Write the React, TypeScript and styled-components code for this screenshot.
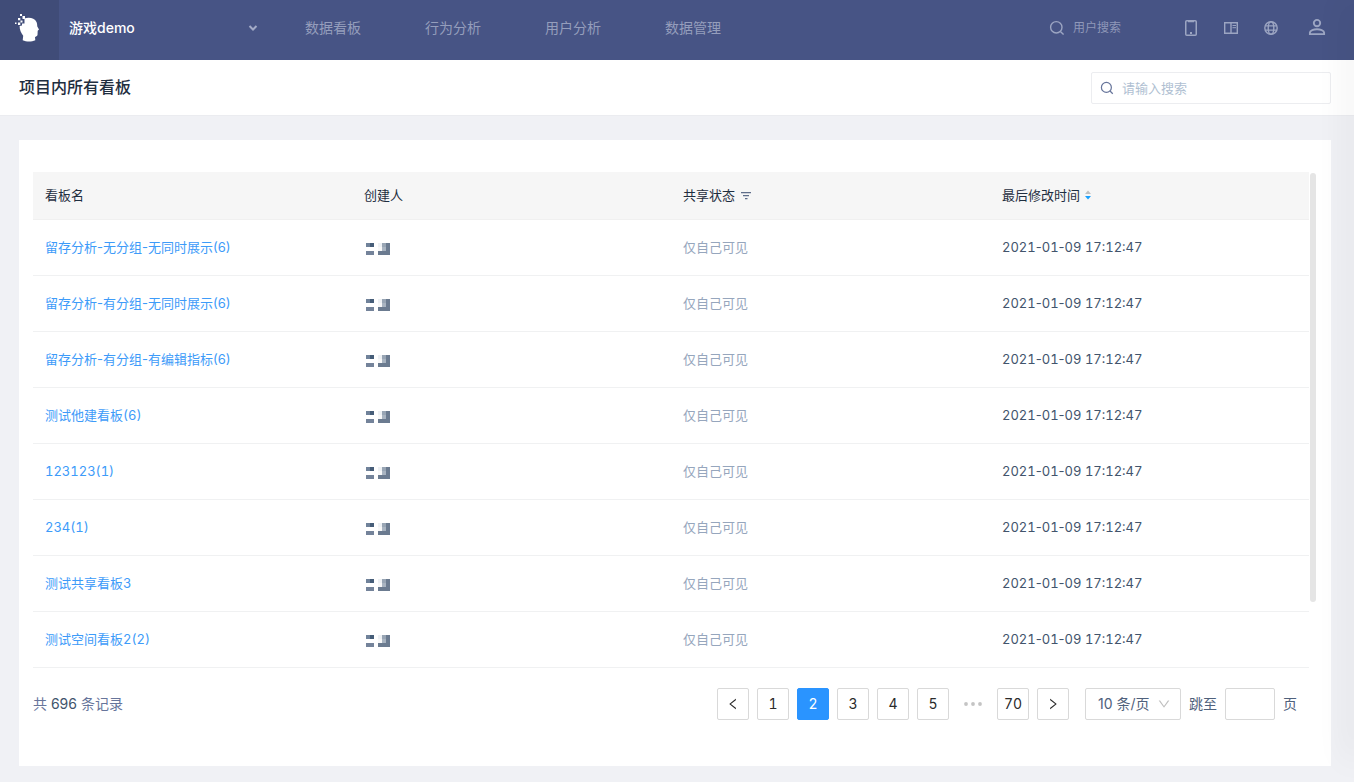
import React from "react";
import styled, { createGlobalStyle } from "styled-components";
import { AiOutlineLeft, AiOutlineRight, AiOutlineDown } from "react-icons/ai";

const GlobalStyle = createGlobalStyle`
  *, *::before, *::after { box-sizing: border-box; }
  body {
    margin: 0;
    background: #f0f1f5;
    color: #1f2e40;
    font: 14px/22px Inter, "Noto Sans CJK SC", sans-serif;
  }
  button, input, select { font: inherit; color: inherit; margin: 0; }
  button { padding: 0; border: 0; background: none; cursor: pointer; }
  a { text-decoration: none; }
  svg { display: block; flex: none; }
`;

const Page = styled.div`
  min-height: 100vh;
  display: flex;
  flex-direction: column;
`;

const TopBar = styled.header`
  display: flex;
  align-items: stretch;
  height: 60px;
  background: #475485;
  color: #9ca5c2;
`;

const Brand = styled.a`
  display: flex;
  width: 59px;
  padding: 13px 0 0 14px;
  background: #404c78;
`;

const ProjectButton = styled.button`
  display: flex;
  align-items: center;
  justify-content: space-between;
  width: 214px;
  padding: 0 14px 4px 10px;
  && { color: #a3abc7; }
`;

const ProjectName = styled.span`
  color: #fff;
  font-weight: 500;
`;

const Nav = styled.nav`
  flex: 1;
  display: flex;
  align-items: center;
  padding: 0 0 4px 32px;
  gap: 64px;
`;

const NavLink = styled.a`
  color: #959ebc;
`;

const Tools = styled.div`
  display: flex;
  align-items: center;
  padding: 0 28px 4px 0;
`;

const UserSearch = styled.label`
  display: flex;
  align-items: center;
  gap: 8px;
  margin-right: 24px;
`;

const UserSearchInput = styled.input`
  width: 87px;
  padding: 0;
  border: 0;
  outline: 0;
  background: transparent;
  font-size: 12px;
  &::placeholder { color: #8f98b9; opacity: 1; }
`;

const IconButton = styled.button<{ $last?: boolean }>`
  display: flex;
  justify-content: center;
  width: ${(p) => (p.$last ? 18 : 14)}px;
  margin-right: ${(p) => (p.$last ? 0 : 26)}px;
  && { color: #9ca5c2; }
  &:nth-last-child(2) { margin-right: 30px; }
`;

const TitleBar = styled.div`
  display: flex;
  align-items: center;
  justify-content: space-between;
  height: 55px;
  padding: 0 23px 0 19px;
  background: #fff;
  box-shadow: 0 1px 0 #ebecf0;
`;

const Title = styled.h1`
  margin: 0;
  padding-bottom: 2px;
  font-size: 16px;
  line-height: 24px;
  font-weight: 500;
`;

const SearchBox = styled.label`
  display: flex;
  align-items: center;
  gap: 8px;
  width: 240px;
  height: 32px;
  padding: 0 8px;
  border: 1px solid #ecedf0;
  border-radius: 2px;
  color: #67759b;
`;

const SearchInput = styled.input`
  flex: 1;
  min-width: 0;
  padding: 0;
  border: 0;
  outline: 0;
  background: transparent;
  font-size: 13px;
  &::placeholder { color: #b0bfd2; opacity: 1; }
`;

const Card = styled.main`
  flex: 1;
  margin: 25px 23px 16px 19px;
  padding: 32px 15px 46px 14px;
  background: #fff;
`;

const TableArea = styled.div`
  display: flex;
  gap: 1px;
`;

const TableWrap = styled.div`
  flex: 1;
  min-width: 0;
`;

const ScrollTrack = styled.div`
  display: flex;
  width: 6px;
  padding-top: 1px;
`;

const ScrollThumb = styled.div`
  width: 6px;
  height: calc(100% - 66px);
  border-radius: 3px;
  background: #e5e5e5;
`;

const Table = styled.table`
  width: 100%;
  table-layout: fixed;
  border-collapse: separate;
  border-spacing: 0;
  font-size: 13px;
`;

const HeadCell = styled.th`
  height: 48px;
  padding: 0 12px 2px;
  background: #f6f6f6;
  border-bottom: 1px solid #f0f0f0;
  text-align: left;
  font-weight: 400;
`;

const HeadContent = styled.div`
  display: flex;
  align-items: center;
  gap: 5px;
`;

const Cell = styled.td<{ $tone?: string }>`
  height: 56px;
  padding: 0 12px 2px;
  border-bottom: 1px solid #f0f1f2;
  color: ${(p) => p.$tone || "#42546c"};
`;

const BoardLink = styled.a<{ $tabular: boolean }>`
  color: #3d9bf9;
  font-variant-numeric: ${(p) => (p.$tabular ? "tabular-nums" : "normal")};
`;

const DateText = styled.time`
  font-variant-numeric: tabular-nums;
`;

const Dash = styled.span`
  font-variant-numeric: normal;
`;

const Footer = styled.div`
  display: flex;
  align-items: center;
  justify-content: space-between;
  margin-top: 20px;
  padding-right: 19px;
`;

const Total = styled.div`
  color: #67759b;
  b { font-weight: 400; color: #42546c; }
`;

const Pager = styled.div`
  display: flex;
  align-items: center;
  gap: 8px;
  color: #4f617c;
`;

const PageButton = styled.button<{ $active?: boolean }>`
  && {
    display: flex;
    align-items: center;
    justify-content: center;
    width: 32px;
    height: 32px;
    border: 1px solid ${(p) => (p.$active ? "#2a94ff" : "#d9d9d9")};
    border-radius: 2px;
    background: ${(p) => (p.$active ? "#2a94ff" : "#fff")};
    color: ${(p) => (p.$active ? "#fff" : "#2b2b2b")};
    font-variant-numeric: tabular-nums;
  }
`;

const Ellipsis = styled.span`
  display: flex;
  justify-content: center;
  width: 32px;
  color: #c4c4c4;
`;

const SizeBox = styled.div`
  display: grid;
  align-items: center;
  width: 96px;
  height: 32px;
  margin-left: 8px;
  border: 1px solid #d9d9d9;
  border-radius: 2px;
  > * { grid-area: 1 / 1; }
  > svg { justify-self: end; margin-right: 9px; pointer-events: none; color: #bfbfbf; }
`;

const SizeSelect = styled.select`
  appearance: none;
  width: 100%;
  height: 30px;
  border: 0;
  outline: 0;
  background: transparent;
  && { padding: 0 0 0 12px; }
`;

const JumpLabel = styled.label`
  display: flex;
  align-items: center;
  gap: 8px;
`;

const JumpInput = styled.input`
  width: 50px;
  height: 32px;
  padding: 0 8px;
  border: 1px solid #d9d9d9;
  border-radius: 2px;
`;

const DrawerEdge = styled.aside`
  position: fixed;
  top: 0;
  right: -8px;
  bottom: 22px;
  width: 8px;
  box-shadow: -4px 0 32px rgba(20, 28, 40, 0.13);
  pointer-events: none;
`;

const Logo = () => (
  <svg width="26" height="30" viewBox="0 0 26 30" fill="#fff">
    <path d="M10.500 5.500C15 4 20.500 5 22.500 9C23.200 10.500 23.200 12 23.300 13.500L25 16.600L23.700 17.800L23.500 22C23.200 23.400 21.800 23.400 21 24L21.300 27.200C17.500 29 12.500 29 8.700 27.200L9.200 22.800C7 19.500 5.600 17 5.600 13L8 12.500V10.500H10.500Z" />
    <path d="M6 1h2v2H6zM8.500 3h2.500v3H8.500zM4 5h2.300v2.300H4zM6.500 7.500h2v2h-2zM1 9.500h1.500v1.500H1zM4 9.500h2.300v2.500H4z" />
  </svg>
);

const SearchIcon = ({ size }: { size: number }) => (
  <svg width={size} height={size} viewBox="0 0 16 16" fill="none" stroke="currentColor" strokeWidth="1.400">
    <circle cx="7.300" cy="7.300" r="5.700" />
    <path d="M11.400 11.400l3.200 3.200" />
  </svg>
);

const PhoneIcon = () => (
  <svg width="14" height="18" viewBox="0 0 14 18" fill="none" stroke="currentColor" strokeWidth="1.500">
    <rect x="1.750" y="1.750" width="10.500" height="14.500" rx="1" />
    <path d="M6 14h2" strokeWidth="2" />
    <path d="M4 2.500h6" />
  </svg>
);

const BookIcon = () => (
  <svg width="14" height="14" viewBox="0 0 14 14" fill="none" stroke="currentColor" strokeWidth="1.400">
    <path d="M.7 1.700h12.600v10.600H.7zM7 1.700v10.600" />
    <path d="M8.500 4.500h3.500M8.500 6.700h3.500" strokeWidth="1" />
  </svg>
);

const GlobeIcon = () => (
  <svg width="14" height="14" viewBox="0 0 14 14" fill="none" stroke="currentColor" strokeWidth="1.400">
    <circle cx="7" cy="7" r="6.200" />
    <ellipse cx="7" cy="7" rx="2.800" ry="6.200" />
    <path d="M1.300 4.900h11.400M1.300 9.100h11.400" />
  </svg>
);

const UserIcon = () => (
  <svg width="18" height="20" viewBox="0 0 18 20" fill="none" stroke="currentColor" strokeWidth="1.900">
    <circle cx="9" cy="5.100" r="3.200" />
    <path d="M1.900 16.100v-1.600c0-2.200 4-3.300 7.100-3.300s7.100 1.100 7.100 3.300v1.600z" />
  </svg>
);

const ChevronIcon = () => (
  <svg width="12" height="8" viewBox="0 0 12 8" fill="none" stroke="currentColor" strokeWidth="2">
    <path d="M2.500 2l3.500 3.500L9.500 2" />
  </svg>
);

const FilterIcon = () => (
  <svg width="12" height="10" viewBox="0 0 12 10" fill="#5f6e8a">
    <path d="M1 2h10v1.300H1zM3 5h6v1.300H3zM5 8h2.500v1.300H5z" />
  </svg>
);

const SortIcon = () => (
  <svg width="6" height="10" viewBox="0 0 6 10">
    <path d="M3 .5l3 3.500H0z" fill="#bfbfbf" />
    <path d="M3 9.500L6 6H0z" fill="#18a0ff" />
  </svg>
);

const DotsIcon = () => (
  <svg width="20" height="4" viewBox="0 0 20 4" fill="currentColor">
    <circle cx="3" cy="2" r="1.900" />
    <circle cx="10" cy="2" r="1.900" />
    <circle cx="17" cy="2" r="1.900" />
  </svg>
);

const MaskedName = styled.svg`
  margin: 5px 0 0 2px;
`;

const Masked = () => (
  <MaskedName width="24" height="12" viewBox="0 0 24 12" shapeRendering="crispEdges" role="img" aria-label="已隐藏">
    <path d="M0 0h4v4H0z" fill="#70829a" />
    <path d="M4 0h4v4H4z" fill="#465d78" />
    <path d="M0 8h8v4H0z" fill="#74839a" />
    <path d="M12 0h4v4h-4z" fill="#eef1f4" />
    <path d="M12 4h4v4h-4z" fill="#f8f8f8" />
    <path d="M16 0h4v4h-4z" fill="#98a5b4" />
    <path d="M16 4h4v4h-4z" fill="#a9b4c1" />
    <path d="M20 0h4v12H12V8h8z" fill="#6b7b90" />
  </MaskedName>
);

const boards = [
  "留存分析-无分组-无同时展示(6)",
  "留存分析-有分组-无同时展示(6)",
  "留存分析-有分组-有编辑指标(6)",
  "测试他建看板(6)",
  "123123(1)",
  "234(1)",
  "测试共享看板3",
  "测试空间看板2(2)",
];

export default function App() {
  return (
    <Page>
      <GlobalStyle />
      <TopBar>
        <Brand href="#" aria-label="首页"><Logo /></Brand>
        <ProjectButton>
          <ProjectName>游戏demo</ProjectName>
          <ChevronIcon />
        </ProjectButton>
        <Nav>
          {["数据看板", "行为分析", "用户分析", "数据管理"].map((item) => (
            <NavLink key={item} href="#">{item}</NavLink>
          ))}
        </Nav>
        <Tools>
          <UserSearch>
            <SearchIcon size={16} />
            <UserSearchInput placeholder="用户搜索" aria-label="用户搜索" />
          </UserSearch>
          <IconButton aria-label="手机"><PhoneIcon /></IconButton>
          <IconButton aria-label="文档"><BookIcon /></IconButton>
          <IconButton aria-label="语言"><GlobeIcon /></IconButton>
          <IconButton $last aria-label="账户"><UserIcon /></IconButton>
        </Tools>
      </TopBar>
      <TitleBar>
        <Title>项目内所有看板</Title>
        <SearchBox>
          <SearchIcon size={14} />
          <SearchInput placeholder="请输入搜索" aria-label="请输入搜索" />
        </SearchBox>
      </TitleBar>
      <Card>
        <TableArea>
          <TableWrap>
            <Table>
              <thead>
                <tr>
                  <HeadCell>看板名</HeadCell>
                  <HeadCell>创建人</HeadCell>
                  <HeadCell><HeadContent>共享状态<FilterIcon /></HeadContent></HeadCell>
                  <HeadCell><HeadContent>最后修改时间<SortIcon /></HeadContent></HeadCell>
                </tr>
              </thead>
              <tbody>
                {boards.map((name) => (
                  <tr key={name}>
                    <Cell><BoardLink href="#" $tabular={!name.includes("-")}>{name}</BoardLink></Cell>
                    <Cell><Masked /></Cell>
                    <Cell $tone="#96a6bd">仅自己可见</Cell>
                    <Cell><DateText>2021<Dash>-</Dash>01<Dash>-</Dash>09 17:12:47</DateText></Cell>
                  </tr>
                ))}
              </tbody>
            </Table>
          </TableWrap>
          <ScrollTrack><ScrollThumb /></ScrollTrack>
        </TableArea>
        <Footer>
          <Total>共 <b>696</b> 条记录</Total>
          <Pager>
            <PageButton aria-label="上一页"><AiOutlineLeft size={14} /></PageButton>
            {[1, 2, 3, 4, 5].map((n) => (
              <PageButton key={n} $active={n === 2}>{n}</PageButton>
            ))}
            <Ellipsis><DotsIcon /></Ellipsis>
            <PageButton>70</PageButton>
            <PageButton aria-label="下一页"><AiOutlineRight size={14} /></PageButton>
            <SizeBox>
              <SizeSelect aria-label="每页条数"><option>10 条/页</option></SizeSelect>
              <AiOutlineDown size={14} />
            </SizeBox>
            <JumpLabel>跳至<JumpInput />页</JumpLabel>
          </Pager>
        </Footer>
      </Card>
      <DrawerEdge />
    </Page>
  );
}
